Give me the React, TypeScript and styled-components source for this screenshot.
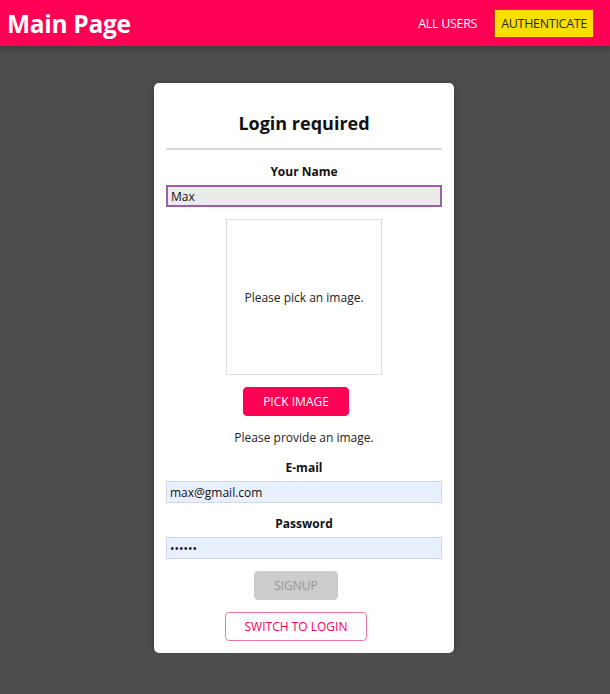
import React from 'react';
import styled, { createGlobalStyle } from 'styled-components';

const GlobalStyle = createGlobalStyle`
    html, body {
        margin: 0;
        padding: 0;
        background: #4d4d4d;
        font-family: 'Open Sans', 'Liberation Sans', sans-serif;
    }
`;

const Header = styled.header`
    height: 46px;
    box-sizing: border-box;
    background: #ff0055;
    display: flex;
    align-items: center;
    justify-content: space-between;
    padding: 0 16px 0 7px;
    box-shadow: 0 2px 6px rgba(0, 0, 0, 0.3);
`;

const Title = styled.h1`
    margin: 0;
    color: #fff;
    font-size: 24.5px;
    font-weight: 700;
    letter-spacing: -0.3px;
`;

const Nav = styled.nav`
    display: flex;
    align-items: center;
    gap: 10px;
`;

const NavLink = styled.a<{ active?: boolean }>`
    font-size: 12.5px;
    color: ${({ active }) => (active ? '#292929' : '#fff')};
    background: ${({ active }) => (active ? '#f8df00' : 'transparent')};
    border: 1px solid ${({ active }) => (active ? '#c23c1c' : 'transparent')};
    padding: 6px 6px;
    line-height: 15px;
    text-decoration: none;
    letter-spacing: -0.3px;
`;

const Main = styled.main`
    display: flex;
    justify-content: center;
    padding: 37px 2px 0 0;
`;

const Card = styled.div`
    width: 300px;
    box-sizing: border-box;
    background: #fff;
    border-radius: 5px;
    box-shadow: 0 2px 8px rgba(0, 0, 0, 0.26);
    padding: 27px 12px 12px;
    display: flex;
    flex-direction: column;
    align-items: center;
`;

const CardTitle = styled.h2`
    margin: 0;
    font-size: 18px;
    font-weight: 700;
    color: #111;
    line-height: 27px;
`;

const Rule = styled.hr`
    width: 100%;
    border: none;
    border-top: 2px solid #d6d6d6;
    margin: 11px 0 1px;
`;

const Label = styled.label`
    margin-top: 12px;
    font-size: 12px;
    font-weight: 700;
    line-height: 18px;
    color: #111;
`;

const Input = styled.input<{ focused?: boolean; autofill?: boolean }>`
    width: 100%;
    box-sizing: border-box;
    height: 22px;
    margin-top: 4px;
    padding: 0 3px;
    font-family: inherit;
    font-size: 12px;
    color: #111;
    outline: none;
    background: ${({ focused, autofill }) =>
        focused ? '#ebebeb' : autofill ? '#e8f0fe' : '#fff'};
    border: ${({ focused }) =>
        focused ? '2px solid #9b5fa8' : '1px solid #cfd8e4'};
`;

const Preview = styled.div`
    width: 156px;
    height: 156px;
    box-sizing: border-box;
    margin-top: 12px;
    border: 1px solid #dedede;
    display: flex;
    align-items: center;
    justify-content: center;
    font-size: 12px;
    color: #222;
`;

const Button = styled.button<{ variant?: 'primary' | 'disabled' | 'inverse' }>`
    font-family: inherit;
    font-size: 12px;
    border-radius: 4px;
    height: 29px;
    padding: 0 19px;
    margin: 12px 16px 0 0;
    cursor: pointer;
    background: ${({ variant }) =>
        variant === 'inverse' ? '#fff' : variant === 'disabled' ? '#cccccc' : '#ff0055'};
    color: ${({ variant }) =>
        variant === 'inverse' ? '#ff0055' : variant === 'disabled' ? '#979797' : '#fff'};
    border: 1px solid
        ${({ variant }) =>
            variant === 'inverse' ? '#ee77a8' : variant === 'disabled' ? '#cccccc' : '#ff0055'};
`;

const Hint = styled.p`
    margin: 13px 0 0;
    font-size: 12px;
    color: #222;
    line-height: 18px;
`;

export default function App() {
    return (
        <>
            <GlobalStyle />
            <Header>
                <Title>Main Page</Title>
                <Nav>
                    <NavLink>ALL USERS</NavLink>
                    <NavLink active>AUTHENTICATE</NavLink>
                </Nav>
            </Header>
            <Main>
                <Card>
                    <CardTitle>Login required</CardTitle>
                    <Rule />
                    <Label>Your Name</Label>
                    <Input focused defaultValue="Max" />
                    <Preview>Please pick an image.</Preview>
                    <Button>PICK IMAGE</Button>
                    <Hint>Please provide an image.</Hint>
                    <Label>E-mail</Label>
                    <Input autofill defaultValue="max@gmail.com" />
                    <Label>Password</Label>
                    <Input autofill type="password" defaultValue="secret" />
                    <Button variant="disabled">SIGNUP</Button>
                    <Button variant="inverse">SWITCH TO LOGIN</Button>
                </Card>
            </Main>
        </>
    );
}
